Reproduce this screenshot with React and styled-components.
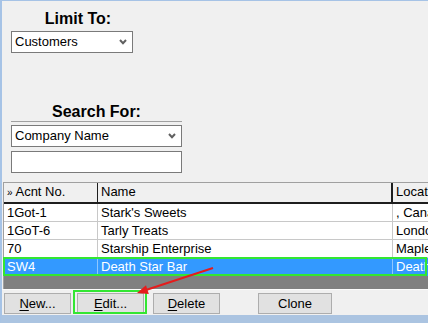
import React from "react";
import styled, { createGlobalStyle } from "styled-components";

const GlobalStyle = createGlobalStyle`
  body {
    margin: 0;
    background: #f0f0f0;
    font-family: "Liberation Sans", Arial, sans-serif;
  }
`;

const customers = [
  { acnt: "1Got-1", name: "Stark's Sweets", location: ", Canada" },
  { acnt: "1GoT-6", name: "Tarly Treats", location: "London" },
  { acnt: "70", name: "Starship Enterprise", location: "Maple Valley" },
  { acnt: "SW4", name: "Death Star Bar", location: "Death Star", selected: true },
];

function Chevron() {
  return (
    <svg width="8" height="6" viewBox="0 0 8 6">
      <path d="M1 1 L4 4.2 L7 1" fill="none" stroke="#606060" strokeWidth="2" />
    </svg>
  );
}

export default function App() {
  return (
    <>
      <GlobalStyle />
      <Frame>
        <FilterArea>
          <Block $width={122}>
            <Heading $shift={12}>Limit To:</Heading>
            <Select>
              <span>Customers</span>
              <Chevron />
            </Select>
          </Block>
          <Block $width={171} $top={49}>
            <Heading $rule>Search For:</Heading>
            <Select>
              <span>Company Name</span>
              <Chevron />
            </Select>
            <TextBox />
          </Block>
        </FilterArea>

        <Grid>
          <HeaderRow>
            <HeaderCell>
              <Mark>»</Mark> Acnt No.
            </HeaderCell>
            <HeaderCell>Name</HeaderCell>
            <HeaderCell>Location</HeaderCell>
          </HeaderRow>
          {customers.map((c) => (
            <Row key={c.acnt} $selected={c.selected}>
              <Cell $selected={c.selected}>{c.acnt}</Cell>
              <Cell $selected={c.selected}>{c.name}</Cell>
              <Cell $selected={c.selected}>{c.location}</Cell>
            </Row>
          ))}
        </Grid>

        <ButtonBar>
          <Button $left={2}>
            <u>N</u>ew...
          </Button>
          <Button $left={6} $marked>
            <u>E</u>dit...
          </Button>
          <Button $left={9}>
            <u>D</u>elete
          </Button>
          <Button $left={38} $width={74}>
            Clone
          </Button>
        </ButtonBar>

        <Arrow width="428" height="323" viewBox="0 0 428 323">
          <line x1="213" y1="268" x2="146" y2="290" stroke="#e51c1c" strokeWidth="2" />
          <polygon points="137,293 148.8,294 146,285.2" fill="#e51c1c" />
        </Arrow>
      </Frame>
    </>
  );
}

const Frame = styled.div`
  position: relative;
  width: 428px;
  height: 323px;
  box-sizing: border-box;
  border-left: 2px solid #a6c3e6;
  border-top: 1px solid #a6c3e6;
  border-bottom: 8px solid #abc4e1;
  display: flex;
  flex-direction: column;
  overflow: hidden;
  font-size: 13px;
  color: #000;
`;

const FilterArea = styled.div`
  display: flex;
  flex-direction: column;
  padding: 8px 0 0 9px;
`;

const Block = styled.div`
  width: ${(p) => p.$width}px;
  margin-top: ${(p) => p.$top || 0}px;
  display: flex;
  flex-direction: column;
`;

const Heading = styled.div`
  height: 19px;
  line-height: 19px;
  font-size: 16px;
  font-weight: bold;
  text-align: center;
  padding-left: ${(p) => p.$shift || 0}px;
  border-bottom: ${(p) => (p.$rule ? "1px solid #a0a0a0" : "none")};
  margin-bottom: 3px;
`;

const Select = styled.div`
  height: 22px;
  box-sizing: border-box;
  border: 1px solid #7a7a7a;
  background: #fff;
  display: flex;
  align-items: center;
  justify-content: space-between;
  padding: 0 5px 0 3px;
  line-height: 20px;
`;

const TextBox = styled.div`
  height: 22px;
  margin-top: 4px;
  box-sizing: border-box;
  border: 1px solid #7a7a7a;
  background: #fff;
`;

const Grid = styled.div`
  margin: 9px 0 0 1px;
  height: 107px;
  box-sizing: border-box;
  border-top: 1px solid #a0a0a0;
  border-left: 1px solid #a0a0a0;
  background: #808080;
`;

const HeaderRow = styled.div`
  display: grid;
  grid-template-columns: 94px 295px 1fr;
  height: 19px;
  background: #f0f0f0;
  border-bottom: 2px solid #1e1e1e;
`;

const HeaderCell = styled.div`
  padding-left: 3px;
  line-height: 18px;
  white-space: nowrap;
  overflow: hidden;
  border-right: 2px solid #1e1e1e;
  &:last-child {
    border-right: none;
  }
  &:first-child {
    border-right-width: 1px;
  }
`;

const Mark = styled.span`
  font-size: 10px;
`;

const Row = styled.div`
  position: relative;
  display: grid;
  grid-template-columns: 94px 295px 1fr;
  height: 18px;
  box-sizing: border-box;
  background: ${(p) => (p.$selected ? "#3399ff" : "#fff")};
  border-bottom: 1px solid ${(p) => (p.$selected ? "#3399ff" : "#c8c8c8")};

  ${(p) =>
    p.$selected &&
    `
    &::after {
      content: "";
      position: absolute;
      inset: -1px 1px -1px -1px;
      border: 2px solid #33e633;
    }
  `}
`;

const Cell = styled.div`
  padding-left: 3px;
  line-height: 17px;
  white-space: nowrap;
  overflow: hidden;
  color: ${(p) => (p.$selected ? "#fff" : "#000")};
  border-right: 1px solid
    ${(p) => (p.$selected ? "rgba(255,255,255,0.45)" : "#c8c8c8")};
  &:last-child {
    border-right: none;
  }
`;

const ButtonBar = styled.div`
  flex: 1;
  display: flex;
  align-items: flex-start;
  padding-top: 3px;
  border-top: 1px solid #fcfcfc;
`;

const Button = styled.div`
  position: relative;
  width: ${(p) => p.$width || 67}px;
  height: 21px;
  margin-left: ${(p) => p.$left}px;
  box-sizing: border-box;
  border: 1px solid #adadad;
  background: #e1e1e1;
  text-align: center;
  line-height: 19px;
  u {
    text-decoration-thickness: 1px;
    text-underline-offset: 2px;
  }

  ${(p) =>
    p.$marked &&
    `
    &::after {
      content: "";
      position: absolute;
      inset: -4px -4px -1px -5px;
      border: 2px solid #33e633;
    }
  `}
`;

const Arrow = styled.svg`
  position: absolute;
  left: -2px;
  top: -1px;
  pointer-events: none;
`;
